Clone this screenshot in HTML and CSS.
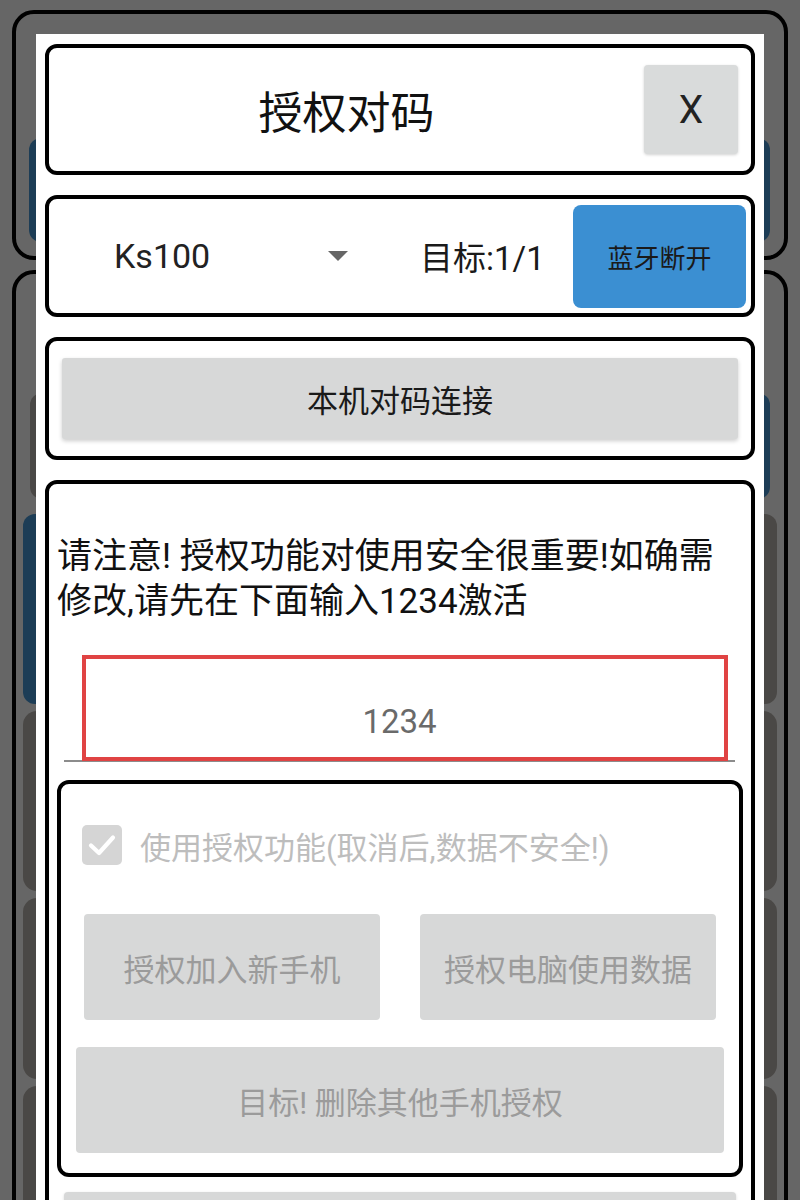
FILE: index.html
```html
<!DOCTYPE html>
<html lang="zh-CN">
<head>
<meta charset="utf-8">
<title>授权对码</title>
<link rel="stylesheet" href="styles.css">
</head>
<body>
<div class="screen">
  <div class="page">
    <section class="bg-card bg-card-top">
      <div class="bg-btn bg-blue bg-wide"></div>
    </section>
    <section class="bg-card bg-card-main">
      <div class="bg-row bg-row-a">
        <div class="bg-btn bg-gray"></div>
        <div class="bg-btn bg-blue"></div>
      </div>
      <div class="bg-row bg-row-b">
        <div class="bg-btn bg-blue"></div>
        <div class="bg-btn bg-gray"></div>
      </div>
      <div class="bg-btn bg-gray bg-tile"></div>
      <div class="bg-btn bg-gray bg-tile"></div>
      <div class="bg-btn bg-gray bg-tile"></div>
    </section>
  </div>

  <div class="scrim"></div>

  <div class="dialog">
    <div class="panel head">
      <h1 class="title">授权对码</h1>
      <button class="close">X</button>
    </div>

    <div class="panel device-bar">
      <div class="spinner">
        <span class="spinner-value">Ks100</span>
        <span class="caret"></span>
      </div>
      <span class="target">目标:1/1</span>
      <button class="bt-btn">蓝牙断开</button>
    </div>

    <div class="panel pair-panel">
      <button class="raised">本机对码连接</button>
    </div>

    <div class="panel auth-panel">
      <p class="notice">请注意! 授权功能对使用安全很重要!如确需修改,请先在下面输入1234激活</p>
      <div class="field">
        <span class="field-value">1234</span>
        <span class="focus-ring"></span>
      </div>
      <div class="panel options">
        <label class="check-row">
          <span class="checkbox">
            <svg viewBox="0 0 40 40" width="40" height="40"><path d="M9 20.5 L17 28 L31 12.5" fill="none" stroke="#fff" stroke-width="4.2" stroke-linecap="round" stroke-linejoin="round"/></svg>
          </span>
          <span class="check-label">使用授权功能(取消后,数据不安全!)</span>
        </label>
        <div class="btn-pair">
          <button class="flat">授权加入新手机</button>
          <button class="flat">授权电脑使用数据</button>
        </div>
        <button class="flat wide">目标! 删除其他手机授权</button>
      </div>
      <button class="flat tail"></button>
    </div>
  </div>
</div>
</body>
</html>
```

FILE: styles.css
```css
* {
  box-sizing: border-box;
}

html, body {
  margin: 0;
  padding: 0;
}

body {
  width: 800px;
  height: 1200px;
  overflow: hidden;
  background: #fff;
  font-family: Roboto, "Noto Sans CJK SC", sans-serif;
  color: #111;
}

button {
  font-family: inherit;
  border: none;
  padding: 0;
  margin: 0;
  cursor: pointer;
}

.screen {
  position: relative;
  width: 800px;
  height: 1200px;
  overflow: hidden;
}

/* underlying page */
.page {
  padding: 10px 12px 0;
  display: flex;
  flex-direction: column;
  gap: 10px;
}

.bg-card {
  border: 4px solid #000;
  border-radius: 22px;
  background: #fff;
}

.bg-card-top {
  height: 250px;
  padding: 124px 14px 0 13px;
}

.bg-card-main {
  height: 1000px;
  padding-top: 119px;
  display: flex;
  flex-direction: column;
}

.bg-btn {
  border-radius: 12px;
}

.bg-blue {
  background: #4a9ad6;
}

.bg-gray {
  background: #bab4ae;
}

.bg-wide {
  height: 104px;
}

.bg-row {
  display: flex;
  gap: 20px;
}

.bg-row > .bg-btn {
  flex: 1;
}

.bg-row-a {
  height: 109px;
  margin: 0 14px;
}

.bg-row-b {
  height: 195px;
  margin: 15px 7px 0;
}

.bg-tile {
  height: 185px;
  margin: 7px 7px 0;
  border-radius: 14px;
}

.scrim {
  position: absolute;
  inset: 0;
  background: rgba(0, 0, 0, 0.6);
}

/* dialog */
.dialog {
  position: absolute;
  left: 36px;
  top: 34px;
  width: 728px;
  height: 1300px;
  background: #fff;
  padding: 10px 9px;
  display: flex;
  flex-direction: column;
  gap: 20px;
}

.panel {
  border: 4px solid #000;
  border-radius: 12px;
  background: #fff;
}

.head {
  height: 131px;
  display: flex;
  align-items: center;
  padding-right: 13px;
}

.title {
  flex: 1;
  margin: 0;
  text-align: center;
  font-size: 44px;
  font-weight: normal;
  color: #111;
}

.close {
  width: 94px;
  height: 89px;
  background: #d9dbdb;
  border-radius: 4px;
  box-shadow: 0 1px 3px rgba(0, 0, 0, 0.18);
  font-size: 39px;
  color: #222;
}

.device-bar {
  height: 122px;
  display: flex;
  align-items: center;
}

.spinner {
  width: 322px;
  display: flex;
  align-items: center;
  justify-content: space-between;
  padding-left: 65px;
  padding-right: 23px;
}

.spinner-value {
  font-size: 34px;
  color: #222;
}

.caret {
  width: 0;
  height: 0;
  border-left: 10.5px solid transparent;
  border-right: 10.5px solid transparent;
  border-top: 10px solid #666;
}

.target {
  margin-left: 49px;
  font-size: 33px;
  color: #1a1a1a;
}

.bt-btn {
  margin-left: auto;
  margin-right: 5px;
  width: 173px;
  height: 103px;
  background: #3b8fd2;
  border-radius: 8px;
  font-size: 26px;
  color: #1a1a1a;
}

.pair-panel {
  height: 123px;
  padding: 17px 13px;
}

.raised {
  width: 100%;
  height: 81px;
  background: #d7d8d8;
  border-radius: 3px;
  box-shadow: 0 2px 4px rgba(0, 0, 0, 0.2);
  font-size: 31px;
  color: #1a1a1a;
}

.auth-panel {
  flex: 1;
  display: flex;
  flex-direction: column;
}

.notice {
  margin: 50px 8px 0;
  font-size: 35px;
  line-height: 45px;
  color: #111;
}

.field {
  position: relative;
  margin: 31px 16px 0 15px;
  height: 107px;
  border-bottom: 2px solid #8c8c8c;
  display: flex;
  align-items: flex-end;
  justify-content: center;
  padding-bottom: 18px;
}

.field-value {
  font-size: 33px;
  line-height: 40px;
  color: #6a6a6a;
}

.focus-ring {
  position: absolute;
  left: 18px;
  right: 7px;
  top: 0;
  bottom: -1px;
  border: 4px solid #e04343;
}

.options {
  margin: 18px 8px 0;
  padding-bottom: 20px;
  display: flex;
  flex-direction: column;
}

.check-row {
  display: flex;
  align-items: center;
  gap: 18px;
  margin-top: 41px;
  padding-left: 21px;
  height: 40px;
}

.checkbox {
  width: 40px;
  height: 40px;
  border-radius: 5px;
  background: #d5d5d5;
  display: block;
}

.checkbox svg {
  display: block;
}

.check-label {
  font-size: 31px;
  color: #bdbdbd;
}

.btn-pair {
  display: flex;
  gap: 40px;
  margin-top: 49px;
  padding: 0 23px;
}

.flat {
  height: 106px;
  background: #d7d8d8;
  border-radius: 4px;
  font-size: 31px;
  color: #9b9b9b;
}

.btn-pair .flat {
  flex: 1;
}

.wide {
  margin: 27px 15px 0;
}

.tail {
  margin: 15px 15px 0;
  height: 100px;
  box-shadow: 0 1px 3px rgba(0, 0, 0, 0.15);
}
```
